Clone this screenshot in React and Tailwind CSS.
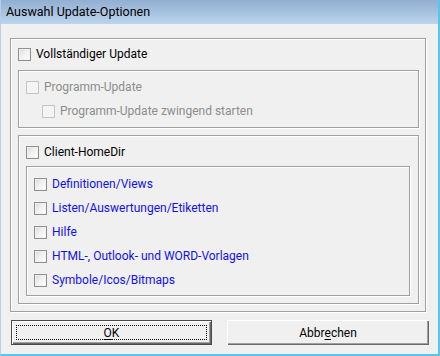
import React from 'react';

const font = { fontFamily: 'Roboto, "Noto Sans", sans-serif' };

// Windows-7 style checkbox
const Box = ({ disabled }) => (
  <span
    className={
      disabled
        ? 'block w-[13px] h-[13px] shrink-0 border border-[#c4c4c4] bg-[#f4f4f4]'
        : 'block w-[13px] h-[13px] shrink-0 border border-[#8e8f8f] bg-gradient-to-br from-[#dadada] via-[#f2f2f2] to-white shadow-[inset_0_0_0_1px_#f0f0f0]'
    }
  />
);

const Row = ({ label, tone = 'normal', indent = false }) => (
  <div className={indent ? 'flex items-center h-[24px] ml-[16px]' : 'flex items-center h-[24px]'}>
    <Box disabled={tone === 'disabled'} />
    <span
      className={
        tone === 'disabled'
          ? 'ml-[5px] text-[12px] leading-none text-[#8d8d8d] whitespace-nowrap'
          : tone === 'blue'
          ? 'ml-[5px] text-[12px] leading-none text-[#1010f0] whitespace-nowrap'
          : 'ml-[5px] text-[12px] leading-none text-black whitespace-nowrap'
      }
    >
      {label}
    </span>
  </div>
);

const etched = 'border border-[#a0a0a0] shadow-[inset_1px_1px_0_#ffffff,1px_1px_0_#ffffff]';

const App = () => {
  const files = [
    'Definitionen/Views',
    'Listen/Auswertungen/Etiketten',
    'Hilfe',
    'HTML-, Outlook- und WORD-Vorlagen',
    'Symbole/Icos/Bitmaps',
  ];

  return (
    <div style={font} className="w-[440px] h-[356px] bg-[#f0f0f0] flex flex-col border-l border-l-[#b9cde4] border-r-2 border-b-2 border-r-[#5cc4ec] border-b-[#5cc4ec] overflow-hidden">
      {/* title bar */}
      <div className="h-[24px] shrink-0 flex items-center pl-[5px] bg-gradient-to-b from-[#92afd1] to-[#bcd4ed]">
        <span className="text-[12.5px] text-black leading-none">Auswahl Update-Optionen</span>
      </div>

      <div className="flex flex-col pl-[9px] pt-[14px]">
        {/* outer group */}
        <div className={`w-[416px] h-[274px] ${etched} pl-[7px] pt-[3px] flex flex-col`}>
          <Row label="Vollständiger Update" />

          <div className={`mt-[4px] w-[401px] h-[58px] ${etched} pl-[7px] pt-[4px] flex flex-col`}>
            <Row label="Programm-Update" tone="disabled" />
            <Row label="Programm-Update zwingend starten" tone="disabled" indent />
          </div>

          <div className={`mt-[7px] w-[401px] h-[169px] ${etched} pl-[7px] pt-[4px] flex flex-col`}>
            <Row label="Client-HomeDir" />
            <div className={`mt-[2px] w-[384px] h-[130px] ${etched} pl-[7px] pt-[5px] flex flex-col`}>
              {files.map(f => (
                <Row key={f} label={f} tone="blue" />
              ))}
            </div>
          </div>
        </div>

        {/* buttons */}
        <div className="flex mt-[8px] gap-[15px] pl-[1px]">
          <button className="w-[201px] h-[25px] border border-[#4a4a4a] bg-[#f0f0f0] shadow-[inset_1px_1px_0_#ffffff,inset_-1px_-1px_0_#696969,inset_-2px_-2px_0_#a0a0a0] p-[4px] flex">
            <span className="flex-1 flex items-center justify-center border border-dotted border-black text-[12px] leading-none text-black">
              <span className="underline underline-offset-2">O</span>K
            </span>
          </button>
          <button className="w-[202px] h-[25px] bg-[#f0f0f0] shadow-[inset_1px_1px_0_#ffffff,inset_-1px_-1px_0_#696969,inset_-2px_-2px_0_#a0a0a0] flex items-center justify-center text-[12px] leading-none text-black">
            Abbr<span className="underline underline-offset-2">e</span>chen
          </button>
        </div>
      </div>
    </div>
  );
};

export default App;
